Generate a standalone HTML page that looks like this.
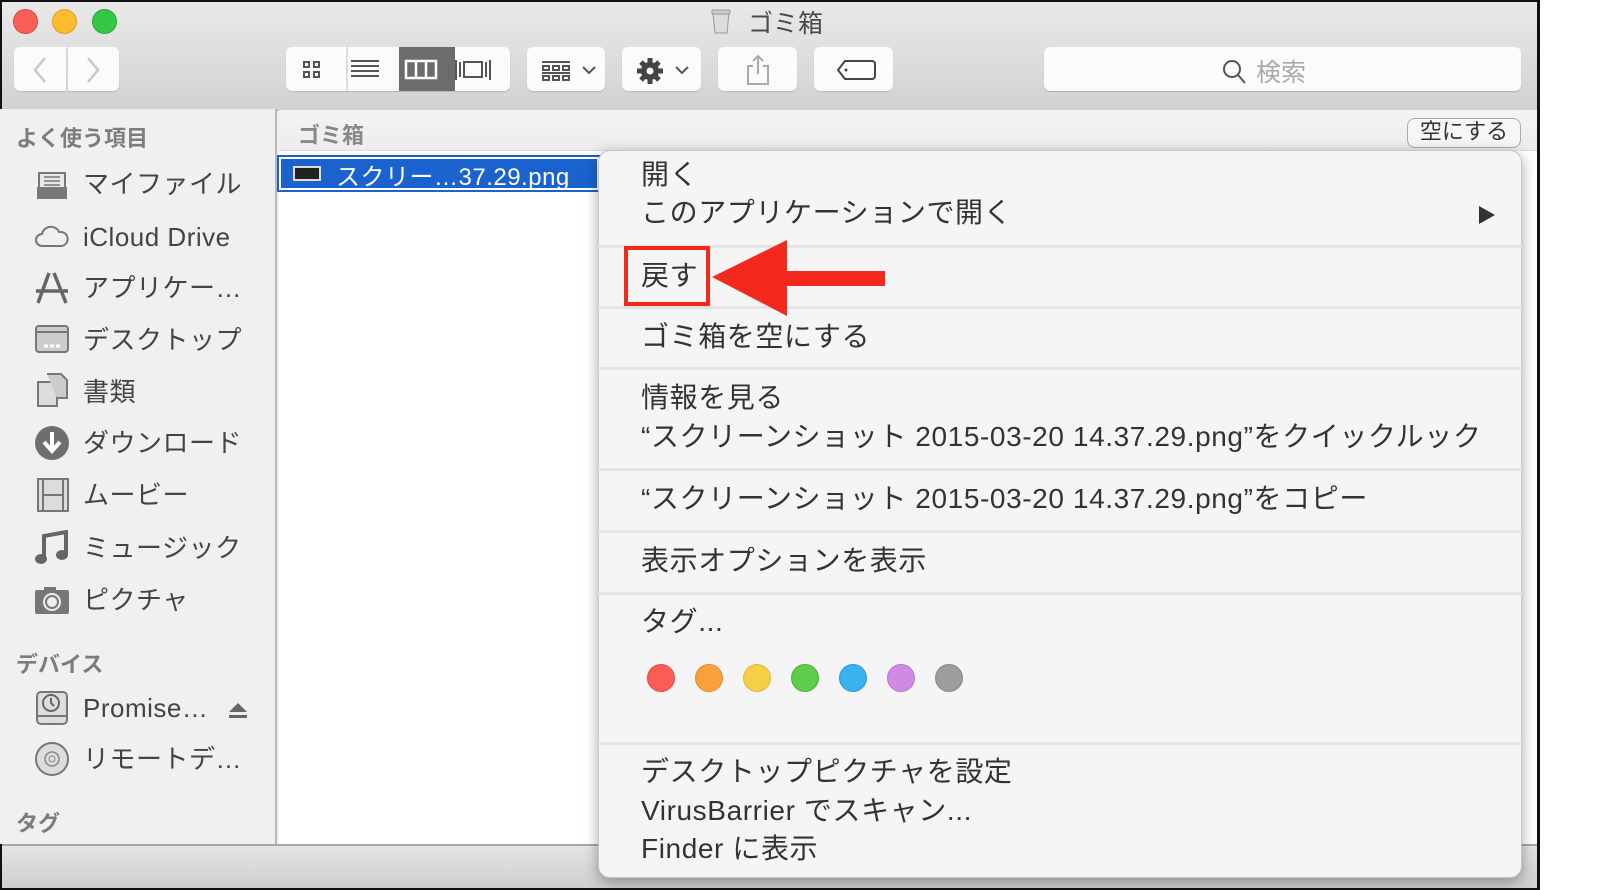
<!DOCTYPE html>
<html><head><meta charset="utf-8">
<style>
*{margin:0;padding:0;box-sizing:border-box}
body{width:1600px;height:890px;background:#fff;position:relative;overflow:hidden;font-family:"Liberation Sans","Noto Sans CJK JP",sans-serif}
.abs{position:absolute}
#win{left:0;top:0;width:1540px;height:890px;border:2px solid #111;border-right-width:3px;background:#f0f0f0;overflow:hidden}
#tb{left:0;top:0;width:1540px;height:109px;background:linear-gradient(#e9e9e9,#d2d2d2);border-bottom:1px solid #b0b0b0}
.tl{width:25px;height:25px;border-radius:50%;top:9px}
.btn{background:#fbfbfb;border-radius:6px;height:44px;top:47px;box-shadow:0 1px 1px rgba(0,0,0,.15)}
.side{left:0;top:109px;width:277px;height:735px;background:#f0f0f0;border-right:2px solid #b8b8b8}
.hd{font-size:22px;color:#7d7d7d;font-weight:bold;left:16px}
.it{left:83px;font-size:26px;color:#444;line-height:30px;letter-spacing:0.5px}
.ic{left:34px;width:36px;height:36px}
.m{left:641px;font-size:28px;color:#333;line-height:32px;white-space:nowrap;letter-spacing:0.6px}
.sep{left:598px;width:924px;height:3px;background:#e4e4e4}
.dot{width:28px;height:28px;border-radius:50%;top:664px}
</style></head><body>
<div id="win" class="abs">
<div id="tb" class="abs"></div>
</div>
<div class="abs tl" style="left:13px;background:#fc5f57;border:1px solid #e0443e"></div>
<div class="abs tl" style="left:52px;background:#fdbc2e;border:1px solid #dea123"></div>
<div class="abs tl" style="left:92px;background:#33c748;border:1px solid #27aa35"></div>
<svg class="abs" style="left:710px;top:7px" width="22" height="28" viewBox="0 0 22 28"><path d="M3 6h16l-2 20H5z" fill="#ddd" stroke="#999"/><rect x="2" y="3" width="18" height="4" rx="1" fill="#ccc" stroke="#999"/></svg>
<div class="abs" style="left:748px;top:4px;font-size:25px;color:#4a4a4a">ゴミ箱</div>
<div class="abs btn" style="left:14px;width:52px;border-radius:6px 0 0 6px"></div>
<div class="abs btn" style="left:68px;width:51px;border-radius:0 6px 6px 0"></div>
<svg class="abs" style="left:28px;top:55px" width="80" height="30"><path d="M17 3L7 15l10 12" fill="none" stroke="#c8c8c8" stroke-width="2.5"/><path d="M60 3l10 12-10 12" fill="none" stroke="#c8c8c8" stroke-width="2.5"/></svg>
<div class="abs btn" style="left:286px;width:224px"></div>
<div class="abs" style="left:346px;top:47px;width:2px;height:44px;background:#ddd"></div>
<div class="abs" style="left:399px;top:47px;width:56px;height:44px;background:#6c6c6c"></div>
<svg class="abs" style="left:286px;top:47px" width="224" height="44" viewBox="0 0 224 44">
<g fill="none" stroke="#555" stroke-width="2"><rect x="18" y="15" width="5" height="5"/><rect x="28" y="15" width="5" height="5"/><rect x="18" y="25" width="5" height="5"/><rect x="28" y="25" width="5" height="5"/></g>
<g stroke="#555" stroke-width="2"><path d="M65 14h28M65 19h28M65 24h28M65 29h28"/></g>
<g fill="none" stroke="#fff" stroke-width="2.5"><rect x="120" y="14" width="30" height="17"/><path d="M130 14v17M140 14v17"/></g>
<g fill="none" stroke="#555" stroke-width="2"><rect x="178" y="15" width="18" height="15"/><path d="M170 13v20M174 15v15M200 15v15M204 13v20"/></g>
</svg>
<div class="abs btn" style="left:527px;width:78px"></div>
<svg class="abs" style="left:540px;top:59px" width="60" height="24"><g fill="none" stroke="#555" stroke-width="2"><path d="M2 3h28M2 14h28"/><rect x="3" y="7" width="6" height="4"/><rect x="13" y="7" width="6" height="4"/><rect x="23" y="7" width="6" height="4"/><rect x="3" y="17" width="6" height="4"/><rect x="13" y="17" width="6" height="4"/><rect x="23" y="17" width="6" height="4"/><path d="M43 8l6 6 6-6"/></g></svg>
<div class="abs btn" style="left:622px;width:79px"></div>
<svg class="abs" style="left:636px;top:57px" width="60" height="28" viewBox="0 0 60 28"><g fill="#444"><circle cx="14" cy="14" r="9"/><g stroke="#444" stroke-width="5"><path d="M14 1v26M1 14h26M5 5l18 18M23 5L5 23"/></g></g><circle cx="14" cy="14" r="3.5" fill="#fbfbfb"/><path d="M40 10l6 6 6-6" fill="none" stroke="#555" stroke-width="2"/></svg>
<div class="abs btn" style="left:718px;width:79px"></div>
<svg class="abs" style="left:745px;top:54px" width="26" height="32"><g fill="none" stroke="#aaa" stroke-width="2"><path d="M8 12H3v18h20V12h-5M13 2v18M8 7l5-5 5 5"/></g></svg>
<div class="abs btn" style="left:814px;width:79px"></div>
<svg class="abs" style="left:836px;top:59px" width="40" height="22"><path d="M9 2h27a3 3 0 0 1 3 3v12a3 3 0 0 1-3 3H9L2 11z" fill="none" stroke="#444" stroke-width="2"/><circle cx="10" cy="11" r="1.5" fill="#444"/></svg>
<div class="abs btn" style="left:1044px;width:477px;box-shadow:0 1px 1px rgba(0,0,0,.2)"></div>
<svg class="abs" style="left:1222px;top:59px" width="26" height="28"><circle cx="10" cy="10" r="8" fill="none" stroke="#555" stroke-width="2"/><path d="M16 16l7 8" stroke="#555" stroke-width="2"/></svg>
<div class="abs" style="left:1256px;top:53px;font-size:25px;color:#aaa">検索</div>
<div class="abs side"></div>
<div class="abs hd" style="top:121px">よく使う項目</div>
<svg class="abs ic" style="top:167px" viewBox="0 0 36 36"><path d="M5 20V6h26v14" fill="#e8e8e8" stroke="#777" stroke-width="2"/><path d="M10 10h16M10 14h16M10 18h16" stroke="#777" stroke-width="1.5"/><path d="M3 20h30v12H3z" fill="#777"/></svg>
<div class="abs it" style="top:169px">マイファイル</div>
<svg class="abs ic" style="top:219px" viewBox="0 0 36 36"><path d="M8 27a6 6 0 0 1 0-12 9 9 0 0 1 17-2 7 7 0 0 1 3 14z" fill="none" stroke="#777" stroke-width="2"/></svg>
<div class="abs it" style="top:222px">iCloud Drive</div>
<svg class="abs ic" style="top:269px" viewBox="0 0 36 36"><path d="M15 4L4 34M20 4l12 30M2 22h32" stroke="#666" stroke-width="3.5" fill="none"/></svg>
<div class="abs it" style="top:273px">アプリケー…</div>
<svg class="abs ic" style="top:321px" viewBox="0 0 36 36"><rect x="2" y="5" width="32" height="26" rx="3" fill="#ccc" stroke="#777" stroke-width="2"/><path d="M2 11h32" stroke="#777" stroke-width="2"/><path d="M10 25h4M16 25h4M22 25h4" stroke="#fff" stroke-width="3"/></svg>
<div class="abs it" style="top:325px">デスクトップ</div>
<svg class="abs ic" style="top:372px" viewBox="0 0 36 36"><path d="M4 10h14l5 5v19H4z" fill="#ddd" stroke="#777" stroke-width="2"/><path d="M13 2h14l6 6v18h-10" fill="#ccc" stroke="#777" stroke-width="2"/></svg>
<div class="abs it" style="top:377px">書類</div>
<svg class="abs ic" style="top:425px" viewBox="0 0 36 36"><circle cx="18" cy="18" r="17" fill="#6e6e6e"/><path d="M18 7v16M10 17l8 9 8-9" stroke="#fff" stroke-width="4" fill="none"/></svg>
<div class="abs it" style="top:428px">ダウンロード</div>
<svg class="abs ic" style="top:477px" viewBox="0 0 36 36"><rect x="4" y="2" width="30" height="32" fill="#ddd" stroke="#777" stroke-width="2"/><path d="M9 2v32M29 2v32M9 18h20" stroke="#777" stroke-width="2"/></svg>
<div class="abs it" style="top:480px">ムービー</div>
<svg class="abs ic" style="top:530px" viewBox="0 0 36 36"><path d="M10 28V6l22-4v22" stroke="#666" stroke-width="4" fill="none"/><ellipse cx="7" cy="29" rx="6" ry="5" fill="#666"/><ellipse cx="28" cy="25" rx="6" ry="5" fill="#666"/></svg>
<div class="abs it" style="top:533px">ミュージック</div>
<svg class="abs ic" style="top:582px" viewBox="0 0 36 36"><rect x="1" y="8" width="34" height="24" rx="2" fill="#777"/><rect x="10" y="5" width="12" height="5" fill="#777"/><circle cx="18" cy="20" r="9" fill="#eee"/><circle cx="18" cy="20" r="6" fill="none" stroke="#777" stroke-width="2"/></svg>
<div class="abs it" style="top:585px">ピクチャ</div>
<div class="abs hd" style="top:647px">デバイス</div>
<svg class="abs ic" style="top:690px" viewBox="0 0 36 36"><rect x="3" y="2" width="30" height="32" rx="4" fill="#ddd" stroke="#777" stroke-width="2"/><path d="M3 26h30" stroke="#777" stroke-width="2"/><circle cx="17" cy="13" r="8" fill="none" stroke="#666" stroke-width="2"/><path d="M17 8v5l3 3" stroke="#666" stroke-width="2" fill="none"/></svg>
<div class="abs it" style="top:693px">Promise…</div>
<svg class="abs" style="left:228px;top:702px" width="20" height="18"><path d="M10 1l9 9H1z" fill="#666"/><rect x="1" y="13" width="18" height="3" fill="#666"/></svg>
<svg class="abs ic" style="top:741px" viewBox="0 0 36 36"><circle cx="18" cy="18" r="16" fill="#ddd" stroke="#777" stroke-width="2"/><circle cx="18" cy="18" r="7" fill="none" stroke="#888" stroke-width="1.5"/><circle cx="18" cy="18" r="3" fill="none" stroke="#888"/></svg>
<div class="abs it" style="top:744px">リモートデ…</div>
<div class="abs hd" style="top:806px">タグ</div>
<div class="abs" style="left:279px;top:110px;width:1258px;height:41px;background:linear-gradient(#f4f4f4,#ececec);border-bottom:1px solid #ddd"></div>
<div class="abs" style="left:298px;top:118px;font-size:22px;color:#888;font-weight:bold">ゴミ箱</div>
<div class="abs" style="left:1407px;top:118px;width:114px;height:30px;border:1.5px solid #aaa;border-radius:8px;background:#f6f6f6;font-size:22px;color:#333;text-align:center;line-height:26px">空にする</div>
<div class="abs" style="left:279px;top:151px;width:1258px;height:693px;background:#fff"></div>
<div class="abs" style="left:279px;top:157px;width:320px;height:33px;background:#1a63cf;border:2px solid #fff;outline:2px solid #1a63cf"></div>
<div class="abs" style="left:293px;top:166px;width:28px;height:15px;background:#222;border:2px solid #ddd"></div>
<div class="abs" style="left:336px;top:157px;font-size:24px;color:#fff;letter-spacing:0.5px">スクリー…37.29.png</div>
<div class="abs" style="left:2px;top:844px;width:1535px;height:44px;background:linear-gradient(#e4e4e4,#cfcfcf);border-top:2px solid #a8a8a8"></div>
<div class="abs" style="left:598px;top:150px;width:924px;height:728px;background:#f5f5f5;border-radius:12px;box-shadow:0 4px 14px rgba(0,0,0,.35);border:1px solid #c8c8c8"></div>
<div class="abs m" style="top:159px">開く</div>
<div class="abs m" style="top:197px">このアプリケーションで開く</div>
<svg class="abs" style="left:1478px;top:205px" width="18" height="20"><path d="M1 1l16 9-16 9z" fill="#333"/></svg>
<div class="abs sep" style="top:245px"></div>
<div class="abs m" style="top:260px">戻す</div>
<div class="abs sep" style="top:306px"></div>
<div class="abs m" style="top:321px">ゴミ箱を空にする</div>
<div class="abs sep" style="top:367px"></div>
<div class="abs m" style="top:382px">情報を見る</div>
<div class="abs m" style="top:421px">“スクリーンショット 2015-03-20 14.37.29.png”をクイックルック</div>
<div class="abs sep" style="top:468px"></div>
<div class="abs m" style="top:483px">“スクリーンショット 2015-03-20 14.37.29.png”をコピー</div>
<div class="abs sep" style="top:530px"></div>
<div class="abs m" style="top:545px">表示オプションを表示</div>
<div class="abs sep" style="top:592px"></div>
<div class="abs m" style="top:606px">タグ...</div>
<div class="abs dot" style="left:647px;background:#fc5b57;border:1px solid #e34a45"></div>
<div class="abs dot" style="left:695px;background:#f8a03c;border:1px solid #e18b2b"></div>
<div class="abs dot" style="left:743px;background:#f7cf47;border:1px solid #dfb837"></div>
<div class="abs dot" style="left:791px;background:#5fcb4a;border:1px solid #4bb038"></div>
<div class="abs dot" style="left:839px;background:#3bb2f0;border:1px solid #2a9ad6"></div>
<div class="abs dot" style="left:887px;background:#d08ae4;border:1px solid #b874cc"></div>
<div class="abs dot" style="left:935px;background:#9d9d9d;border:1px solid #888"></div>
<div class="abs sep" style="top:742px"></div>
<div class="abs m" style="top:756px">デスクトップピクチャを設定</div>
<div class="abs m" style="top:795px">VirusBarrier でスキャン...</div>
<div class="abs m" style="top:833px">Finder に表示</div>
<div class="abs" style="left:624px;top:246px;width:86px;height:60px;border:4px solid #f4291e"></div>
<svg class="abs" style="left:710px;top:238px" width="175" height="80"><path d="M2 39L77 2v31h104v15H77v30z" fill="#f4291e"/></svg>
</body></html>
